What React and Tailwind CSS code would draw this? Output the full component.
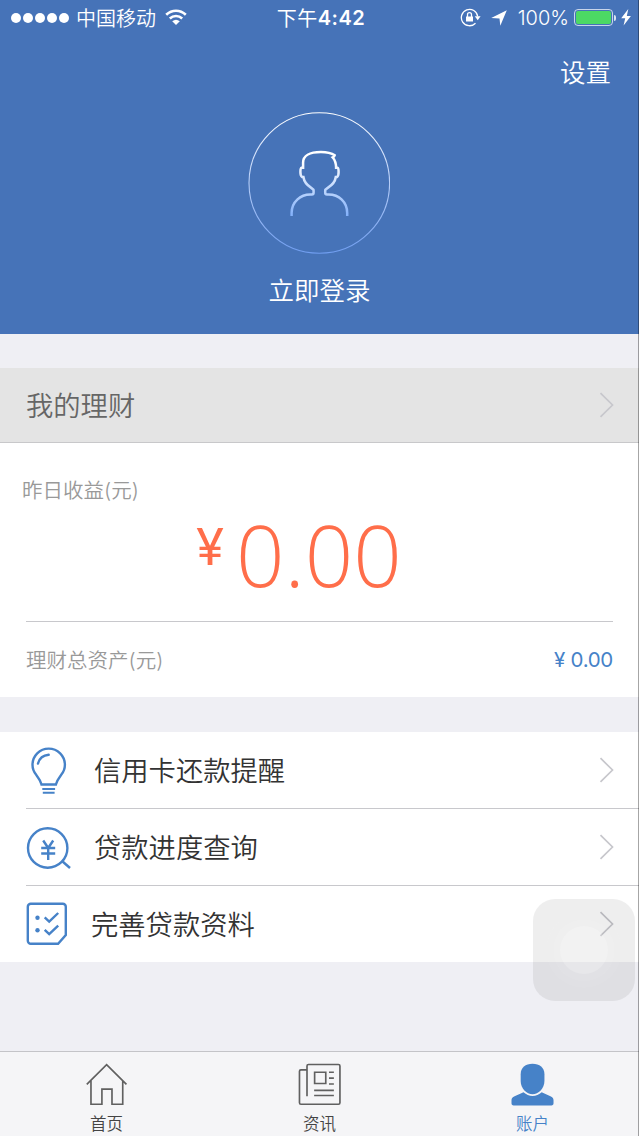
const services = [
    { id: "remind", label: "信用卡还款提醒", icon: BulbIcon },
    { id: "progress", label: "贷款进度查询", icon: LoanSearchIcon },
    { id: "profile", label: "完善贷款资料", icon: ChecklistIcon },
];

const tabs = [
    { id: "home", label: "首页", icon: HomeIcon },
    { id: "news", label: "资讯", icon: NewsIcon },
    { id: "account", label: "账户", icon: AccountIcon, active: true },
];

function BulbIcon() {
    return (
        <svg className="-ml-[2px] w-12 h-12 overflow-visible" viewBox="0 0 48 48" fill="none" stroke="#4682c8" strokeWidth="2.4">
            <path d="M17.500 38.500C16 32.500 13.500 31.500 12 28.500C9.500 25.500 8.500 22.500 8.500 18.800a16.200 16.200 0 0 1 32.400 0C40.900 22.500 39.900 25.500 37.400 28.500C35.900 31.500 33.400 32.500 31.900 38.500Z" />
            <path d="M14 17.500C15.500 12 18.500 9.300 24.700 8.800" strokeLinecap="round" />
            <path d="M18.300 43h12.800M18.800 46.700h11.800" strokeWidth="2" />
        </svg>
    );
}

function LoanSearchIcon() {
    return (
        <svg className="-ml-[2px] mt-[2px] w-12 h-12" viewBox="0 0 48 48" fill="none" stroke="#4682c8" strokeWidth="2.4">
            <circle cx="23.700" cy="24" r="19.700" />
            <path d="M38 37l8 7" />
            <path d="M19.200 16.500l5 7.500 5-7.500M24.200 24v12M17.200 24h14M17.200 29.500h14" />
        </svg>
    );
}

function ChecklistIcon() {
    return (
        <svg className="-ml-[2px] w-12 h-12" viewBox="0 0 48 48" fill="none" stroke="#4682c8" strokeWidth="2.4">
            <path d="M6.800 3.700h32a3 3 0 0 1 3 3V35l-7.700 8.700H6.800a3 3 0 0 1-3-3V6.700a3 3 0 0 1 3-3Z" />
            <path d="M20.700 17.300l4.500 4.300 9-8.600M20.700 29.900l4.500 4.300 9-8.600" />
            <circle cx="13.500" cy="17.700" r="2.200" fill="#4682c8" stroke="none" />
            <circle cx="13.500" cy="30.300" r="2.200" fill="#4682c8" stroke="none" />
        </svg>
    );
}

function HomeIcon() {
    return (
        <svg className="w-11 h-11" viewBox="0 0 44 44" fill="none" stroke="#606060" strokeWidth="1.700">
            <path d="M1.300 21.800L21.600 1.800l20.300 20M5.600 18v24.200H16.800V26.700H27.100v15.500H38.100V18" />
        </svg>
    );
}

function NewsIcon() {
    return (
        <svg className="w-11 h-11" viewBox="0 0 44 44" fill="none" stroke="#606060" strokeWidth="1.700">
            <path d="M8.700 34V3q0-1.500 1.500-1.500h30.700q1.500 0 1.500 1.500v37.700q0 1.500-1.500 1.500H2.500Q1 42.200 1 40.700V8.500Q1 7 2.500 7h6.200" />
            <path d="M16.500 9.500h11.400v11.500H16.500zM31.200 9.500h5M31.200 15.500h5M31.200 21.500h5M16 28h20.200M16 33.300h20.200" />
        </svg>
    );
}

function AccountIcon() {
    return (
        <svg className="w-11 h-11" viewBox="0 0 44 44" fill="#4682c8">
            <path d="M21.500.8c7.200 0 12.200 3.900 12.200 10.700v7C33.700 26.500 27.500 32 21.500 32S9.400 26.500 9.400 18.500v-7C9.400 4.700 14.300.8 21.500.8Z" />
            <path d="M12.300 29.900c5.300 5 13.300 5 18.600 0l9.500 4.300c1.700.8 2.600 2 2.600 3.800v3.200c0 1.500-.7 2.200-2.200 2.200H2.200C.7 43.400 0 42.700 0 41.200V38c0-1.800.9-3 2.600-3.800Z" />
        </svg>
    );
}

function Chevron() {
    return (
        <svg className="w-4 h-7 shrink-0" viewBox="0 0 16 28" fill="none" stroke="#c7c7cc" strokeWidth="1.700">
            <path d="M2.500 2.200L14.500 14l-12 11.800" />
        </svg>
    );
}

function StatusBar() {
    return (
        <div className="h-[35px] flex items-center text-white text-[20px] pl-[11px] pr-[8px]">
            <div className="flex-1 flex items-center">
                <div className="flex gap-[2px]">
                    {[1, 2, 3, 4, 5].map((i) => (
                        <div key={i} className="w-[10px] h-[10px] rounded-full bg-white" />
                    ))}
                </div>
                <span className="ml-[7px] mt-[2px] leading-[30px] font-[350]">中国移动</span>
                <svg className="ml-[9px] w-[22px] h-[17px]" viewBox="0 0 22 17" fill="none" stroke="white" strokeWidth="2.600">
                    <path d="M1.200 5.800C7 .3 15 .3 20.800 5.800M4.800 9.500c3.600-3.400 8.800-3.400 12.400 0" />
                    <path d="M7.200 12.300q3.800-3 7.600 0L11 16Z" fill="white" stroke="none" />
                </svg>
            </div>
            <span className="flex items-center font-semibold tracking-[0.5px]">
                <span className="font-normal mt-[2px]">下午</span>4:42
            </span>
            <div className="flex-1 flex items-center justify-end">
                <svg className="w-[21px] h-[19px]" viewBox="0 0 21 19" fill="none" stroke="white" strokeWidth="1.300">
                    <path d="M15.500 15.200A8.200 8.200 0 1 1 17.700 8.500" />
                    <path d="M14.800 8.300h5.800l-2.900 3.900Z" fill="white" stroke="none" />
                    <path d="M6 8.500h7v5H6z" fill="white" stroke="none" />
                    <path d="M7.500 9V6.700a2 2 0 0 1 4 0V9" />
                </svg>
                <svg className="ml-[10px] w-4 h-4" viewBox="0 0 16 16" fill="white">
                    <path d="M15.800.2L9.300 15.800 8.500 8.400.2 7.900Z" />
                </svg>
                <span className="ml-[11px] font-[350]">100%</span>
                <div className="ml-[5px] w-[39px] h-[17px] rounded-[4px] border border-white/70 p-px">
                    <div className="h-full rounded-[2px] bg-[#4cd964]" />
                </div>
                <div className="ml-px w-[2px] h-[6px] rounded-r bg-white/80" />
                <svg className="ml-[5px] w-[10px] h-[17px]" viewBox="0 0 10 17" fill="white">
                    <path d="M7.300 0L.2 9.300h4L2.600 16.500 9.900 7H5.800Z" />
                </svg>
            </div>
        </div>
    );
}

function Header() {
    return (
        <header className="h-[334px] bg-[#4673b8] text-white">
            <StatusBar />
            <div className="h-[77px] flex justify-end pt-[19px] pr-7 text-[25.500px] leading-[38px] font-[350]">设置</div>
            <div className="flex flex-col items-center">
                <svg className="w-[142px] h-[142px] mr-px" viewBox="0 0 142 142" fill="none">
                    <defs>
                        <linearGradient id="ring" gradientUnits="userSpaceOnUse" x1="0" y1="0" x2="0" y2="142">
                            <stop offset="0" stopColor="#ffffff" />
                            <stop offset="1" stopColor="#6f9df0" />
                        </linearGradient>
                        <linearGradient id="person" gradientUnits="userSpaceOnUse" x1="0" y1="40" x2="0" y2="104">
                            <stop offset="0.150" stopColor="#ffffff" />
                            <stop offset="1" stopColor="#82b0fa" />
                        </linearGradient>
                    </defs>
                    <circle cx="71.300" cy="71" r="70.300" stroke="url(#ring)" strokeWidth="1.100" />
                    <path
                        d="M43.200 104v-3C43.200 90 52 82.500 62 82.500h1.500q1.700 0 1.700-2V78.500C65.200 75.500 56.500 75 55 65h-1.300c-1-.7-1.700-2.500-1.700-5s.5-4 1.200-4.200h1.500V50.500C54.700 44 61 40 72.500 40c6 0 10.500 1 13.800 3.300q-.3 1.500-2 2.200C87 48.500 87.700 51 87.700 55.800h1.300c.8.200 1.200 1.700 1.200 4.200s-.5 4.300-1.500 5h-1.300C86 75 76.800 75.500 76.800 78.500v2q0 2 1.700 2h1.700C90.500 82.500 98.800 90 98.800 101v3"
                        transform="translate(0.400 0)"
                        stroke="url(#person)"
                        strokeWidth="2.500"
                    />
                </svg>
                <div className="mt-[18px] text-[25.500px] leading-[38px] font-[350]">立即登录</div>
            </div>
        </header>
    );
}

function Wealth() {
    return (
        <section className="mt-[34px] bg-white h-[329px]">
            <div className="h-[75px] flex items-center justify-between bg-[#e4e4e4] border-b border-[#c8c8ca] pl-[26px] pr-[25px] text-[27.300px] text-[#666] font-[350]">
                <span className="pt-[4px]">我的理财</span>
                <Chevron />
            </div>
            <div className="h-[178px] pt-[33px] pl-[22px]">
                <div className="text-[20.500px] leading-[30px] text-[#999] font-[350]">昨日收益(元)</div>
                <div className="pl-[174px] flex text-[#ff6e4a]">
                    <span className="w-[40px] mt-[11px] text-[51px] leading-[60px] font-normal">¥</span>
                    <span className="text-[85px] leading-[97px] font-[340] font-['Open_Sans']">0.00</span>
                </div>
            </div>
            <div className="ml-[26px] mr-[26px] h-[76px] border-t border-[#c8c8cc] flex items-center justify-between text-[20.500px]">
                <span className="pt-[3px] text-[#999] font-[350]">理财总资产(元)</span>
                <span className="pt-[2px] text-[#4682c8] tracking-[-0.3px]">¥ 0.00</span>
            </div>
        </section>
    );
}

function ServiceRow({ item, last }) {
    const Icon = item.icon;

    return (
        <div className={`pl-[26px] ${last ? "h-[76px]" : "h-[77px]"}`}>
            <div className={`h-full flex items-center pr-[25px] ${last ? "" : "border-b border-[#c8c8cc]"}`}>
                <Icon />
                <span className={`flex-1 pt-[4px] text-[27.300px] leading-[40px] text-[#333] font-[350] ${last ? "pl-[19px]" : "pl-[22px]"}`}>
                    {item.label}
                </span>
                <Chevron />
            </div>
        </div>
    );
}

function TabBar() {
    return (
        <nav className="mt-auto h-[85px] flex border-t border-[#c4c4c8] bg-[#f5f5f7]">
            {tabs.map((tab) => {
                const Icon = tab.icon;
                return (
                    <div
                        key={tab.id}
                        className={`flex-1 flex flex-col items-center pt-[11px] ${tab.active ? "text-[#4682c8]" : "text-[#444]"}`}
                    >
                        <Icon />
                        <span className="mt-[6px] text-[16.500px] leading-[24px] font-[350]">{tab.label}</span>
                    </div>
                );
            })}
        </nav>
    );
}

function AssistiveTouch() {
    return (
        <div className="absolute left-[533px] top-[899px] w-[102px] h-[102px] rounded-[22px] bg-black/[0.065] flex items-center justify-center">
            <div className="w-[76px] h-[76px] rounded-full bg-white/[0.04] flex items-center justify-center">
                <div className="w-[62px] h-[62px] rounded-full bg-white/[0.06] flex items-center justify-center">
                    <div className="w-[48px] h-[48px] rounded-full bg-white/20" />
                </div>
            </div>
        </div>
    );
}

export default function App() {
    return (
        <div className="relative w-[639px] h-[1136px] overflow-hidden flex flex-col bg-[#efeff4] font-[Inter,'Noto_Sans_CJK_SC',sans-serif]">
            <Header />
            <Wealth />
            <section className="mt-[35px] bg-white">
                {services.map((item, i) => (
                    <ServiceRow key={item.id} item={item} last={i === services.length - 1} />
                ))}
            </section>
            <TabBar />
            <AssistiveTouch />
            <div className="absolute right-0 top-0 w-px h-full bg-black/35" />
        </div>
    );
}
